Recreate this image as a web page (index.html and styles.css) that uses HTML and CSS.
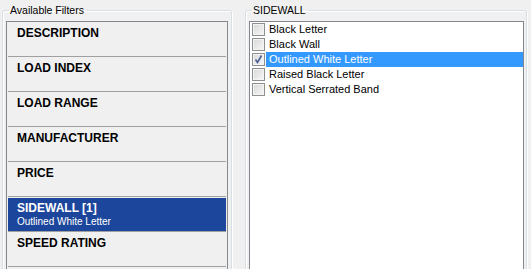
FILE: index.html
```html
<!DOCTYPE html>
<html lang="en">
<head>
    <meta charset="UTF-8">
    <title>Tire Filters</title>
    <link rel="stylesheet" href="styles.css">
</head>
<body>

    <div class="filters">

        <!-- Available filters -->
        <fieldset class="group group-left">
            <legend>Available Filters</legend>
            <div class="filter-list">
                <div class="filter-item">DESCRIPTION</div>
                <div class="filter-item">LOAD INDEX</div>
                <div class="filter-item">LOAD RANGE</div>
                <div class="filter-item">MANUFACTURER</div>
                <div class="filter-item">PRICE</div>
                <div class="filter-item selected">
                    SIDEWALL [1]
                    <div class="filter-value">Outlined White Letter</div>
                </div>
                <div class="filter-item">SPEED RATING</div>
            </div>
        </fieldset>

        <!-- Values of the current filter -->
        <fieldset class="group group-right">
            <legend>SIDEWALL</legend>
            <div class="check-list">
                <div class="check-row"><span class="box"></span><span class="label">Black Letter</span></div>
                <div class="check-row"><span class="box"></span><span class="label">Black Wall</span></div>
                <div class="check-row active">
                    <span class="box">
                        <svg width="11" height="11" viewBox="0 0 11 11"><path d="M2.5 5.5 L4.5 8.5 L8.5 1.5" fill="none" stroke="#4b5f96" stroke-width="1.6"/></svg>
                    </span>
                    <span class="label">Outlined White Letter</span>
                </div>
                <div class="check-row"><span class="box"></span><span class="label">Raised Black Letter</span></div>
                <div class="check-row"><span class="box"></span><span class="label">Vertical Serrated Band</span></div>
            </div>
        </fieldset>

    </div>

</body>
</html>
```

FILE: styles.css
```css
body {
    margin: 0;
    padding: 0;
    background-color: #f0f0f0;
    font-family: "Liberation Sans", Arial, sans-serif;
    overflow: hidden;
    height: 269px;
}

.filters {
    display: flex;
    gap: 13px;
    padding: 4px 0 0 2px;
}

/* Group boxes */
.group {
    margin: 0;
    border: 1px solid #d5dfe5;
    border-radius: 3px;
    box-shadow: inset 1px 1px 0 #fff, 1px 1px 0 #fff;
    height: 280px;
    box-sizing: border-box;
}

.group legend {
    font-size: 10.5px;
    line-height: 13px;
    color: #000;
    padding: 0 2px 0 1px;
    margin-left: 3px;
}

.group-left {
    width: 230px;
    padding: 4px 3px 0 3px;
}

.group-right {
    width: 282px;
    padding: 4px 2px 0 3px;
}

/* Left list of filters */
.filter-list {
    border: 1px solid #828790;
    background-color: #f0f0f0;
    height: 270px;
}

.filter-item {
    margin: 1px 1px 0 1px;
    height: 34px;
    border-bottom: 1px solid #a0a0a0;
    padding: 3px 9px 0 9px;
    box-sizing: border-box;
    font-size: 12px;
    font-weight: bold;
    line-height: 14px;
    color: #000;
}

.filter-item.selected {
    background-color: #1c469c;
    background-clip: padding-box;
    color: #fff;
}

.filter-value {
    font-size: 10px;
    font-weight: normal;
    line-height: 13px;
}

/* Right list of check boxes */
.check-list {
    border: 1px solid #828790;
    background-color: #fff;
    height: 270px;
}

.check-row {
    display: flex;
    align-items: center;
    height: 15px;
    padding-left: 2px;
    font-size: 11px;
    color: #000;
}

.box {
    width: 13px;
    height: 13px;
    box-sizing: border-box;
    border: 1px solid #8e8f8f;
    background: linear-gradient(135deg, #d8d8d8, #f7f7f7);
    box-shadow: inset 0 0 0 1px #f4f4f4;
    margin-right: 1px;
    display: flex;
    align-items: center;
    justify-content: center;
}

.label {
    flex: 1;
    padding-left: 3px;
    line-height: 15px;
}

.check-row.active .label {
    background-color: #3399ff;
    color: #fff;
}
```
